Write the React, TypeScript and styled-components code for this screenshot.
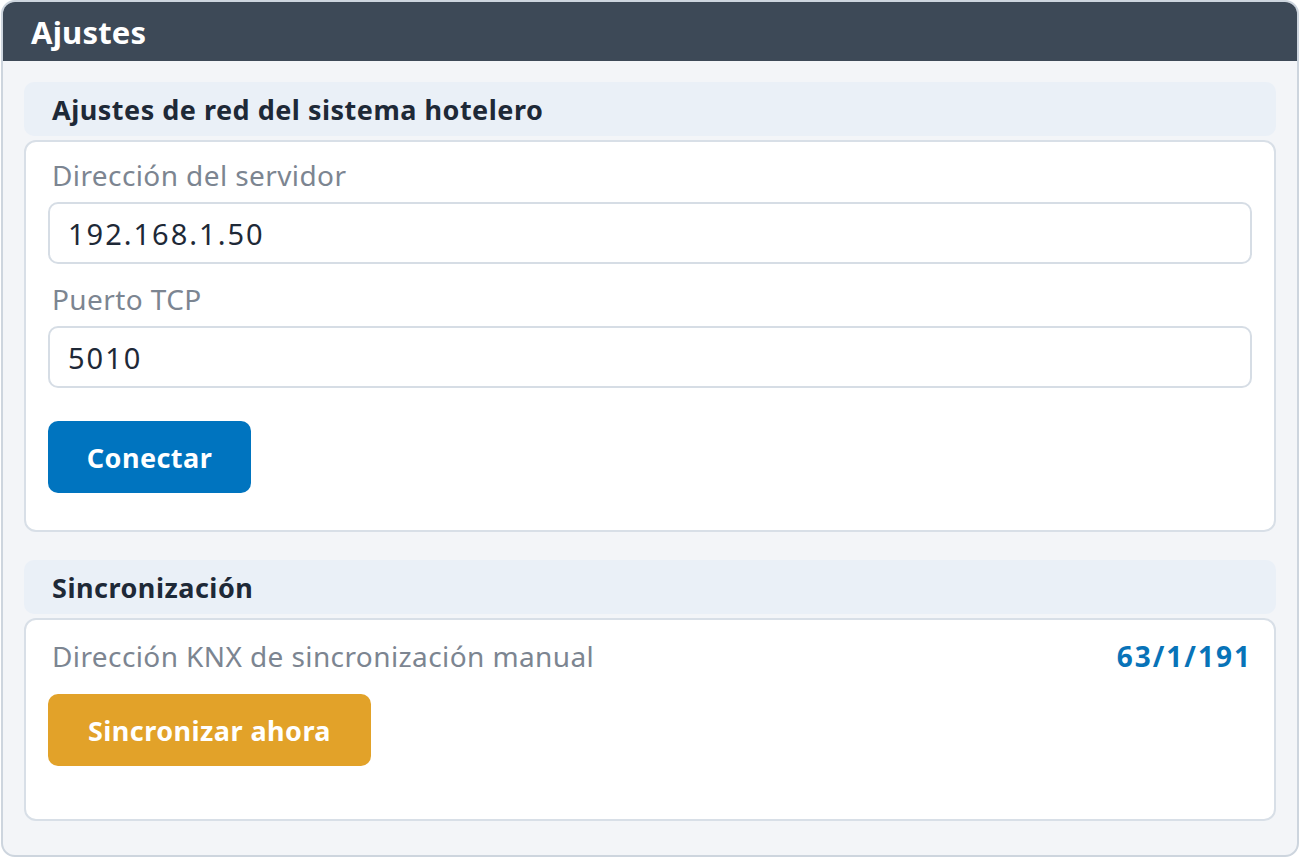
import React from "react";
import styled, { createGlobalStyle } from "styled-components";

const Global = createGlobalStyle`
  html, body { margin: 0; padding: 0; background: #ffffff; }
  body { font-family: "Noto Sans", "Open Sans", sans-serif; }
  * { box-sizing: border-box; }
`;

const Panel = styled.div`
  width: 1298px;
  height: 857px;
  margin: 0 0 0 1px;
  border: 2px solid #cdd5de;
  border-radius: 14px;
  background: #f3f5f8;
  overflow: hidden;
  display: flex;
  flex-direction: column;
`;

const Header = styled.div`
  height: 59px;
  background: #3d4957;
  color: #ffffff;
  display: flex;
  align-items: center;
  padding-left: 28px;
  font-size: 31px;
  font-weight: 700;
  letter-spacing: 0.2px;
  flex-shrink: 0;
`;

const Body = styled.div`
  padding: 21px 21px 0 21px;
  display: flex;
  flex-direction: column;
`;

const Section = styled.section<{ $gap?: number }>`
  display: flex;
  flex-direction: column;
  gap: 4px;
  margin-bottom: ${(p) => p.$gap ?? 0}px;
`;

const SectionTitle = styled.div`
  height: 54px;
  background: #eaf0f7;
  border-radius: 10px;
  display: flex;
  align-items: center;
  padding-left: 28px;
  font-size: 27px;
  letter-spacing: 0.5px;
  font-weight: 700;
  color: #1e2937;
`;

const Card = styled.div<{ $height: number; $pt: number }>`
  height: ${(p) => p.$height}px;
  background: #ffffff;
  border: 2px solid #d8dfe7;
  border-radius: 12px;
  padding: ${(p) => p.$pt}px 22px 0 22px;
  display: flex;
  flex-direction: column;
`;

const Label = styled.div`
  font-size: 28px;
  letter-spacing: 0.4px;
  color: #7c8591;
  height: 44px;
  display: flex;
  align-items: center;
  padding-left: 4px;
`;

const Input = styled.div`
  height: 62px;
  border: 2px solid #d6dde5;
  border-radius: 10px;
  display: flex;
  align-items: center;
  padding-left: 18px;
  font-size: 29px;
  letter-spacing: 2px;
  color: #1e2937;
  margin: 5px 0 13px 0;
`;

const Button = styled.button<{ $bg: string; $width: number; $mt?: number }>`
  width: ${(p) => p.$width}px;
  height: 72px;
  margin-top: ${(p) => p.$mt ?? 0}px;
  border: none;
  border-radius: 10px;
  background: ${(p) => p.$bg};
  color: #ffffff;
  font-family: inherit;
  font-size: 27px;
  letter-spacing: 0.45px;
  font-weight: 700;
  display: flex;
  align-items: center;
  justify-content: center;
  padding: 0;
  cursor: pointer;
`;

const Row = styled.div`
  display: flex;
  align-items: center;
  justify-content: space-between;
  height: 44px;
  margin-bottom: 16px;
`;

const Value = styled.div`
  font-size: 28px;
  letter-spacing: 2px;
  font-weight: 700;
  color: #0873b8;
  padding-right: 0;
`;

export default function App() {
  return (
    <>
      <Global />
      <Panel>
        <Header>Ajustes</Header>
        <Body>
          <Section $gap={28}>
            <SectionTitle>Ajustes de red del sistema hotelero</SectionTitle>
            <Card $height={392} $pt={11}>
              <Label>Dirección del servidor</Label>
              <Input>192.168.1.50</Input>
              <Label>Puerto TCP</Label>
              <Input>5010</Input>
              <Button $bg="#0074bf" $width={203} $mt={20}>Conectar</Button>
            </Card>
          </Section>
          <Section>
            <SectionTitle>Sincronización</SectionTitle>
            <Card $height={203} $pt={14}>
              <Row>
                <Label>Dirección KNX de sincronización manual</Label>
                <Value>63/1/191</Value>
              </Row>
              <Button $bg="#e2a229" $width={323}>Sincronizar ahora</Button>
            </Card>
          </Section>
        </Body>
      </Panel>
    </>
  );
}
